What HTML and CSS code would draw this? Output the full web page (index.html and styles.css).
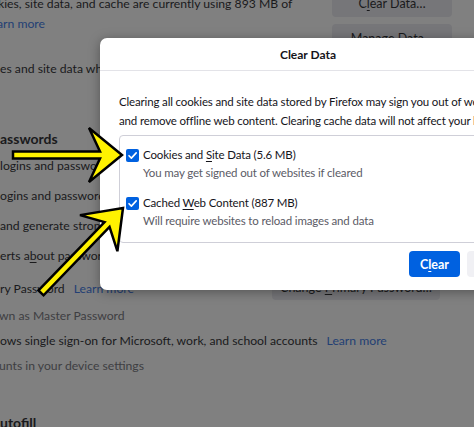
FILE: index.html
```html
<!DOCTYPE html>
<html lang="en">
<head>
<meta charset="utf-8">
<title>Clear Data</title>
<link rel="stylesheet" href="styles.css">
</head>
<body>
<main class="prefs">
  <section class="storage">
    <div class="storage-desc">
      <div class="row">kies, site data, and cache are currently using 893 MB of</div>
      <div class="row"><a class="link link-first">arn more</a></div>
    </div>
    <div class="storage-buttons">
      <button class="pref-btn">C<u>l</u>ear Data…</button>
      <button class="pref-btn">Manage Data…</button>
    </div>
  </section>
  <div class="row row-delete">es and site data when Firefox is closed</div>

  <h2 class="heading heading-pw">asswords</h2>
  <div class="pw-options">
    <div class="row">logins and passwords for websites</div>
    <div class="row">ogins and passwords</div>
    <div class="row">and generate strong passwords</div>
    <div class="row">erts a<u>b</u>out passwords for breached websites</div>
  </div>
  <div class="row row-primary">
    <span>ry Password</span><a class="link">Learn more</a>
    <button class="pref-btn primary-btn">Change <u>P</u>rimary Password…</button>
  </div>
  <div class="row row-sub row-formerly">wn as Master Password</div>
  <div class="row row-sso">ows single sign-on for Microsoft, work, and school accounts<a class="link">Learn more</a></div>
  <div class="row row-sub row-accounts">unts in your device settings</div>
  <h2 class="heading heading-autofill">utofill</h2>
</main>

<div class="dialog">
  <header class="dialog-title">Clear Data</header>
  <div class="dialog-body">
    <p class="dialog-desc">Clearing all cookies and site data stored by Firefox may sign you out of websites<br>and remove offline web content. Clearing cache data will not affect your logins.</p>
    <div class="options">
      <label class="option">
        <span class="check"><svg viewBox="0 0 13 13" width="13" height="13"><path d="M3 6.7 L5.4 9.1 L10.2 3.9" fill="none" stroke="#fff" stroke-width="1.6" stroke-linecap="round" stroke-linejoin="round"/></svg></span>
        <span class="option-text">
          <span class="option-label">Cookies and <u>S</u>ite Data (5.6 MB)</span>
          <span class="option-hint">You may get signed out of websites if cleared</span>
        </span>
      </label>
      <label class="option">
        <span class="check"><svg viewBox="0 0 13 13" width="13" height="13"><path d="M3 6.7 L5.4 9.1 L10.2 3.9" fill="none" stroke="#fff" stroke-width="1.6" stroke-linecap="round" stroke-linejoin="round"/></svg></span>
        <span class="option-text">
          <span class="option-label">Cached <u>W</u>eb Content (887 MB)</span>
          <span class="option-hint">Will require websites to reload images and data</span>
        </span>
      </label>
    </div>
    <div class="dialog-buttons">
      <button class="btn btn-primary">C<u>l</u>ear</button>
      <button class="btn btn-secondary">Cancel</button>
    </div>
  </div>
</div>

<svg class="arrows" width="474" height="427" viewBox="0 0 474 427">
  <polygon points="13,151.5 100,151.5 89,128 122,155 89,182 100,158.5 13,158.5" fill="#fff200" stroke="#000" stroke-width="2.5" stroke-linejoin="miter"/>
  <g transform="translate(123,208) rotate(-46)">
    <polygon points="-118,-3.5 -23,-3.5 -35,-26 0,0 -35,26 -23,3.5 -118,3.5" fill="#fff200" stroke="#000" stroke-width="2.5" stroke-linejoin="miter"/>
  </g>
</svg>
</body>
</html>
```

FILE: styles.css
```css
html, body {
  margin: 0;
  padding: 0;
}

body {
  width: 474px;
  height: 427px;
  overflow: hidden;
  position: relative;
  background: #808080;
  color: #1a1a1c;
  font-family: Lato, "Liberation Sans", Arial, sans-serif;
  font-size: 12.2px;
}

u {
  text-decoration: underline;
  text-underline-offset: 2px;
}

.prefs {
  display: flex;
  flex-direction: column;
}

.row {
  height: 20px;
  line-height: 20px;
  white-space: nowrap;
  display: flex;
  align-items: center;
}

.link {
  color: #233f74;
  margin-left: 9px;
}

.link-first {
  margin-left: -1px;
}

.storage {
  display: flex;
  align-items: flex-start;
  height: 40px;
  margin-top: -6px;
}

.storage-desc {
  flex: 1;
  min-width: 0;
  overflow: hidden;
  margin-left: -2px;
}

.storage-buttons {
  display: flex;
  flex-direction: column;
  gap: 7px;
  margin-top: -5px;
  margin-right: 22px;
  width: 120px;
  flex: none;
}

.pref-btn {
  flex: none;
  height: 28px;
  border: none;
  border-radius: 4px;
  background: #767679;
  color: #1a1a1c;
  font-family: inherit;
  font-size: 12.5px;
  padding: 0 8px;
  white-space: nowrap;
}

.row-delete {
  margin-top: 25px;
}

.heading {
  margin: 0;
  height: 22px;
  line-height: 22px;
  font-size: 14px;
  font-weight: bold;
  white-space: nowrap;
}

.heading-pw {
  margin-top: 49px;
}

.pw-options {
  display: flex;
  flex-direction: column;
  gap: 10px;
  margin-top: 6px;
}

.row-primary {
  margin-top: 13px;
}

.primary-btn {
  align-self: flex-start;
  margin-top: -5px;
  margin-left: auto;
  margin-right: 34px;
  width: 168px;
  height: 26px;
}

.row-sub {
  color: #3e3e42;
}

.row-formerly {
  margin-top: 7px;
  margin-left: -1px;
}

.row-sso {
  margin-top: 5px;
}

.row-accounts {
  margin-top: 5px;
  margin-left: -1px;
}

.heading-autofill {
  margin-top: 36px;
}

/* Dialog */
.dialog {
  position: absolute;
  left: 100px;
  top: 38px;
  width: 450px;
  background: #fff;
  border-radius: 7px;
  box-shadow: 0 2px 12px rgba(0, 0, 0, 0.35);
  color: #15141a;
  font-size: 11.5px;
  letter-spacing: -0.15px;
}

.dialog-title {
  height: 32px;
  line-height: 33px;
  border-bottom: 1px solid #e3e3e8;
  text-align: center;
  font-weight: bold;
  font-size: 12px;
  letter-spacing: 0;
  padding-right: 34px;
}

.dialog-body {
  padding: 21px 19px 13px;
}

.dialog-desc {
  margin: 0;
  line-height: 19px;
  white-space: nowrap;
}

.options {
  margin-top: 5px;
  border: 1px solid #cfcfd8;
  border-radius: 4px;
  padding: 10px 6px 12px;
  display: flex;
  flex-direction: column;
  gap: 12px;
}

.option {
  display: flex;
  gap: 4px;
}

.check {
  width: 13px;
  height: 13px;
  margin-top: 3px;
  background: #0061e0;
  border-radius: 2px;
  flex: none;
  display: flex;
}

.option-text {
  display: flex;
  flex-direction: column;
}

.option-label,
.option-hint {
  line-height: 18px;
  white-space: nowrap;
}

.option-hint {
  color: #5b5b66;
}

.dialog-buttons {
  margin-top: 8px;
  display: flex;
  justify-content: flex-end;
  gap: 7px;
}

.btn {
  height: 26px;
  border: none;
  border-radius: 4px;
  font-family: inherit;
  font-size: 12.5px;
  font-weight: bold;
  letter-spacing: 0;
}

.btn-primary {
  width: 51px;
  background: #0061e0;
  color: #fff;
}

.btn-secondary {
  width: 64px;
  background: #f0f0f4;
  color: #15141a;
}

.arrows {
  position: absolute;
  left: 0;
  top: 0;
  pointer-events: none;
}
```
